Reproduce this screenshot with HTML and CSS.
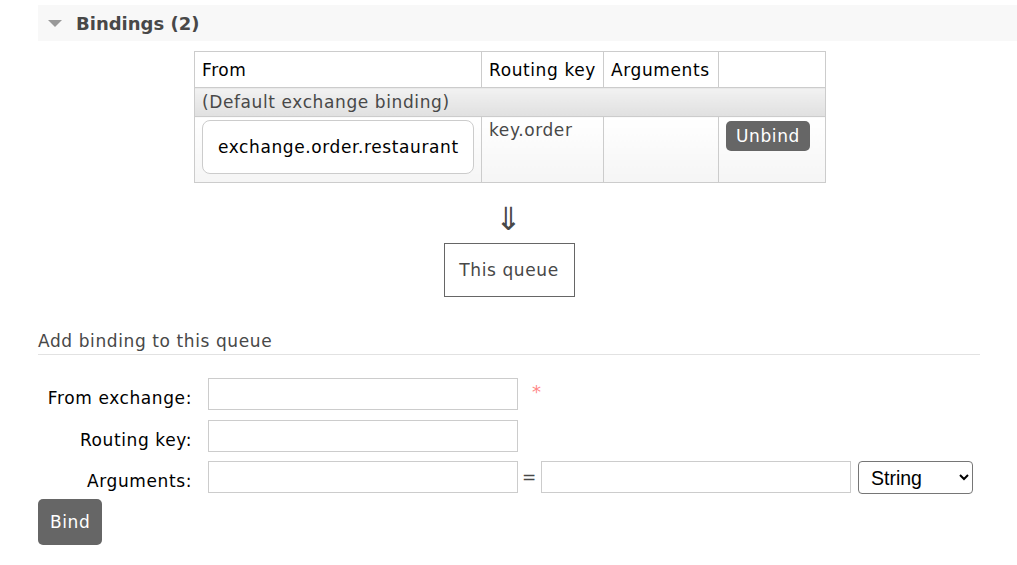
FILE: index.html
```html
<!DOCTYPE html>
<html lang="en">
<head>
  <meta charset="UTF-8" />
  <title>Queue bindings</title>
  <link rel="stylesheet" href="styles.css">
</head>
<body>
  <div class="section">
    <h2 class="section-head"><span class="toggle"></span>Bindings (2)</h2>
    <div class="section-body">
      <table class="bindings">
        <colgroup>
          <col class="c-from">
          <col class="c-key">
          <col class="c-args">
          <col class="c-action">
        </colgroup>
        <tr>
          <th>From</th>
          <th>Routing key</th>
          <th>Arguments</th>
          <th></th>
        </tr>
        <tr class="default-row">
          <td colspan="4">(Default exchange binding)</td>
        </tr>
        <tr class="binding-row">
          <td><span class="exchange">exchange.order.restaurant</span></td>
          <td>key.order</td>
          <td></td>
          <td><button class="btn unbind">Unbind</button></td>
        </tr>
      </table>

      <div class="arrow">&#8659;</div>
      <div class="this-queue">This queue</div>

      <h3>Add binding to this queue</h3>
      <table class="form">
        <tr>
          <th>From exchange:</th>
          <td>
            <div class="field-line">
              <input type="text" class="field">
              <span class="mand">*</span>
            </div>
          </td>
        </tr>
        <tr>
          <th>Routing key:</th>
          <td>
            <div class="field-line">
              <input type="text" class="field">
            </div>
          </td>
        </tr>
        <tr>
          <th>Arguments:</th>
          <td>
            <div class="field-line">
              <input type="text" class="field">
              <span class="eq">=</span>
              <input type="text" class="field">
              <select class="arg-type">
                <option>String</option>
                <option>Number</option>
                <option>Boolean</option>
              </select>
            </div>
          </td>
        </tr>
      </table>
      <button class="btn bind">Bind</button>
    </div>
  </div>
</body>
</html>
```

FILE: styles.css
```css
* {
  box-sizing: border-box;
}

body {
  margin: 0;
  padding: 5px 0 0 38px;
  font-family: "DejaVu Sans", Verdana, sans-serif;
  font-size: 17px;
  letter-spacing: 0.6px;
  color: #484848;
  background: #fff;
}

.section-head {
  display: flex;
  align-items: center;
  height: 36px;
  margin: 0;
  padding-left: 10px;
  background: #f8f8f8;
  font-size: 18px;
  font-weight: bold;
  letter-spacing: 0;
  color: #484848;
}

.toggle {
  width: 0;
  height: 0;
  margin-right: 14px;
  border-left: 7px solid transparent;
  border-right: 7px solid transparent;
  border-top: 7px solid #999;
}

.section-body {
  width: 942px;
}

/* bindings table */
.bindings {
  margin: 10px 0 0 156px;
  width: 631px;
  table-layout: fixed;
  border-collapse: collapse;
}

.c-from { width: 287px; }
.c-key { width: 122px; }
.c-args { width: 115px; }
.c-action { width: 107px; }

.bindings th,
.bindings td {
  border: 1px solid #ccc;
  padding: 0 7px;
  text-align: left;
  line-height: 20px;
}

.bindings th {
  height: 36px;
  font-weight: normal;
  color: #000;
  white-space: nowrap;
}

.default-row td {
  height: 29px;
  background: linear-gradient(#f2f2f2, #e0e0e0);
}

.binding-row td {
  vertical-align: top;
  padding-top: 3px;
  padding-bottom: 8px;
  background: linear-gradient(#fff, #f5f5f5);
}

.exchange {
  display: block;
  padding: 16px 15px;
  border: 1px solid #ccc;
  border-radius: 8px;
  background: #fff;
  color: #000;
  white-space: nowrap;
}

.btn {
  border: none;
  border-radius: 5px;
  background: #666;
  color: #fff;
  font-family: inherit;
  font-size: 17px;
  letter-spacing: 0.6px;
  cursor: pointer;
}

.unbind {
  height: 30px;
  padding: 0 10px;
  margin-top: 1px;
}

.arrow {
  margin-top: 18px;
  text-align: center;
  font-size: 32px;
  line-height: 36px;
  font-weight: 200;
  color: #484848;
}

.this-queue {
  width: 131px;
  margin: 6px auto 0;
  padding: 16px 0;
  border: 1px solid #666;
  text-align: center;
  line-height: 20px;
}

h3 {
  margin: 34px 0 0;
  padding-bottom: 3px;
  border-bottom: 1px solid #e2e2e2;
  font-size: 17px;
  font-weight: normal;
  line-height: 20px;
}

/* add binding form */
.form {
  margin-top: 23px;
  border-collapse: collapse;
}

.form th {
  width: 170px;
  padding: 10px 16px 0 0;
  text-align: right;
  font-weight: normal;
  line-height: 20px;
  color: #000;
  white-space: nowrap;
  vertical-align: top;
}

.form td {
  padding: 0 0 10px;
  vertical-align: top;
}

.form tr:nth-child(2) td {
  padding-bottom: 9px;
}

.form tr:last-child td {
  padding-bottom: 5px;
}

.field-line {
  display: flex;
  align-items: flex-start;
}

.field {
  width: 310px;
  height: 32px;
  border: 1px solid #ccc;
  font-family: inherit;
  font-size: 17px;
}

.mand {
  margin: 4px 0 0 14px;
  color: #f88;
  font-size: 18px;
  line-height: 20px;
}

.eq {
  width: 23px;
  line-height: 32px;
  text-align: center;
  color: #484848;
}

.arg-type {
  width: 115px;
  height: 33px;
  margin-left: 7px;
  padding-left: 8px;
  border: 1px solid #767676;
  border-radius: 4px;
  background: #fff;
  color: #000;
  font-family: "Liberation Sans", Arial, sans-serif;
  font-size: 19.5px;
  letter-spacing: 0;
}

.bind {
  display: block;
  height: 46px;
  padding: 0 12px;
}
```
